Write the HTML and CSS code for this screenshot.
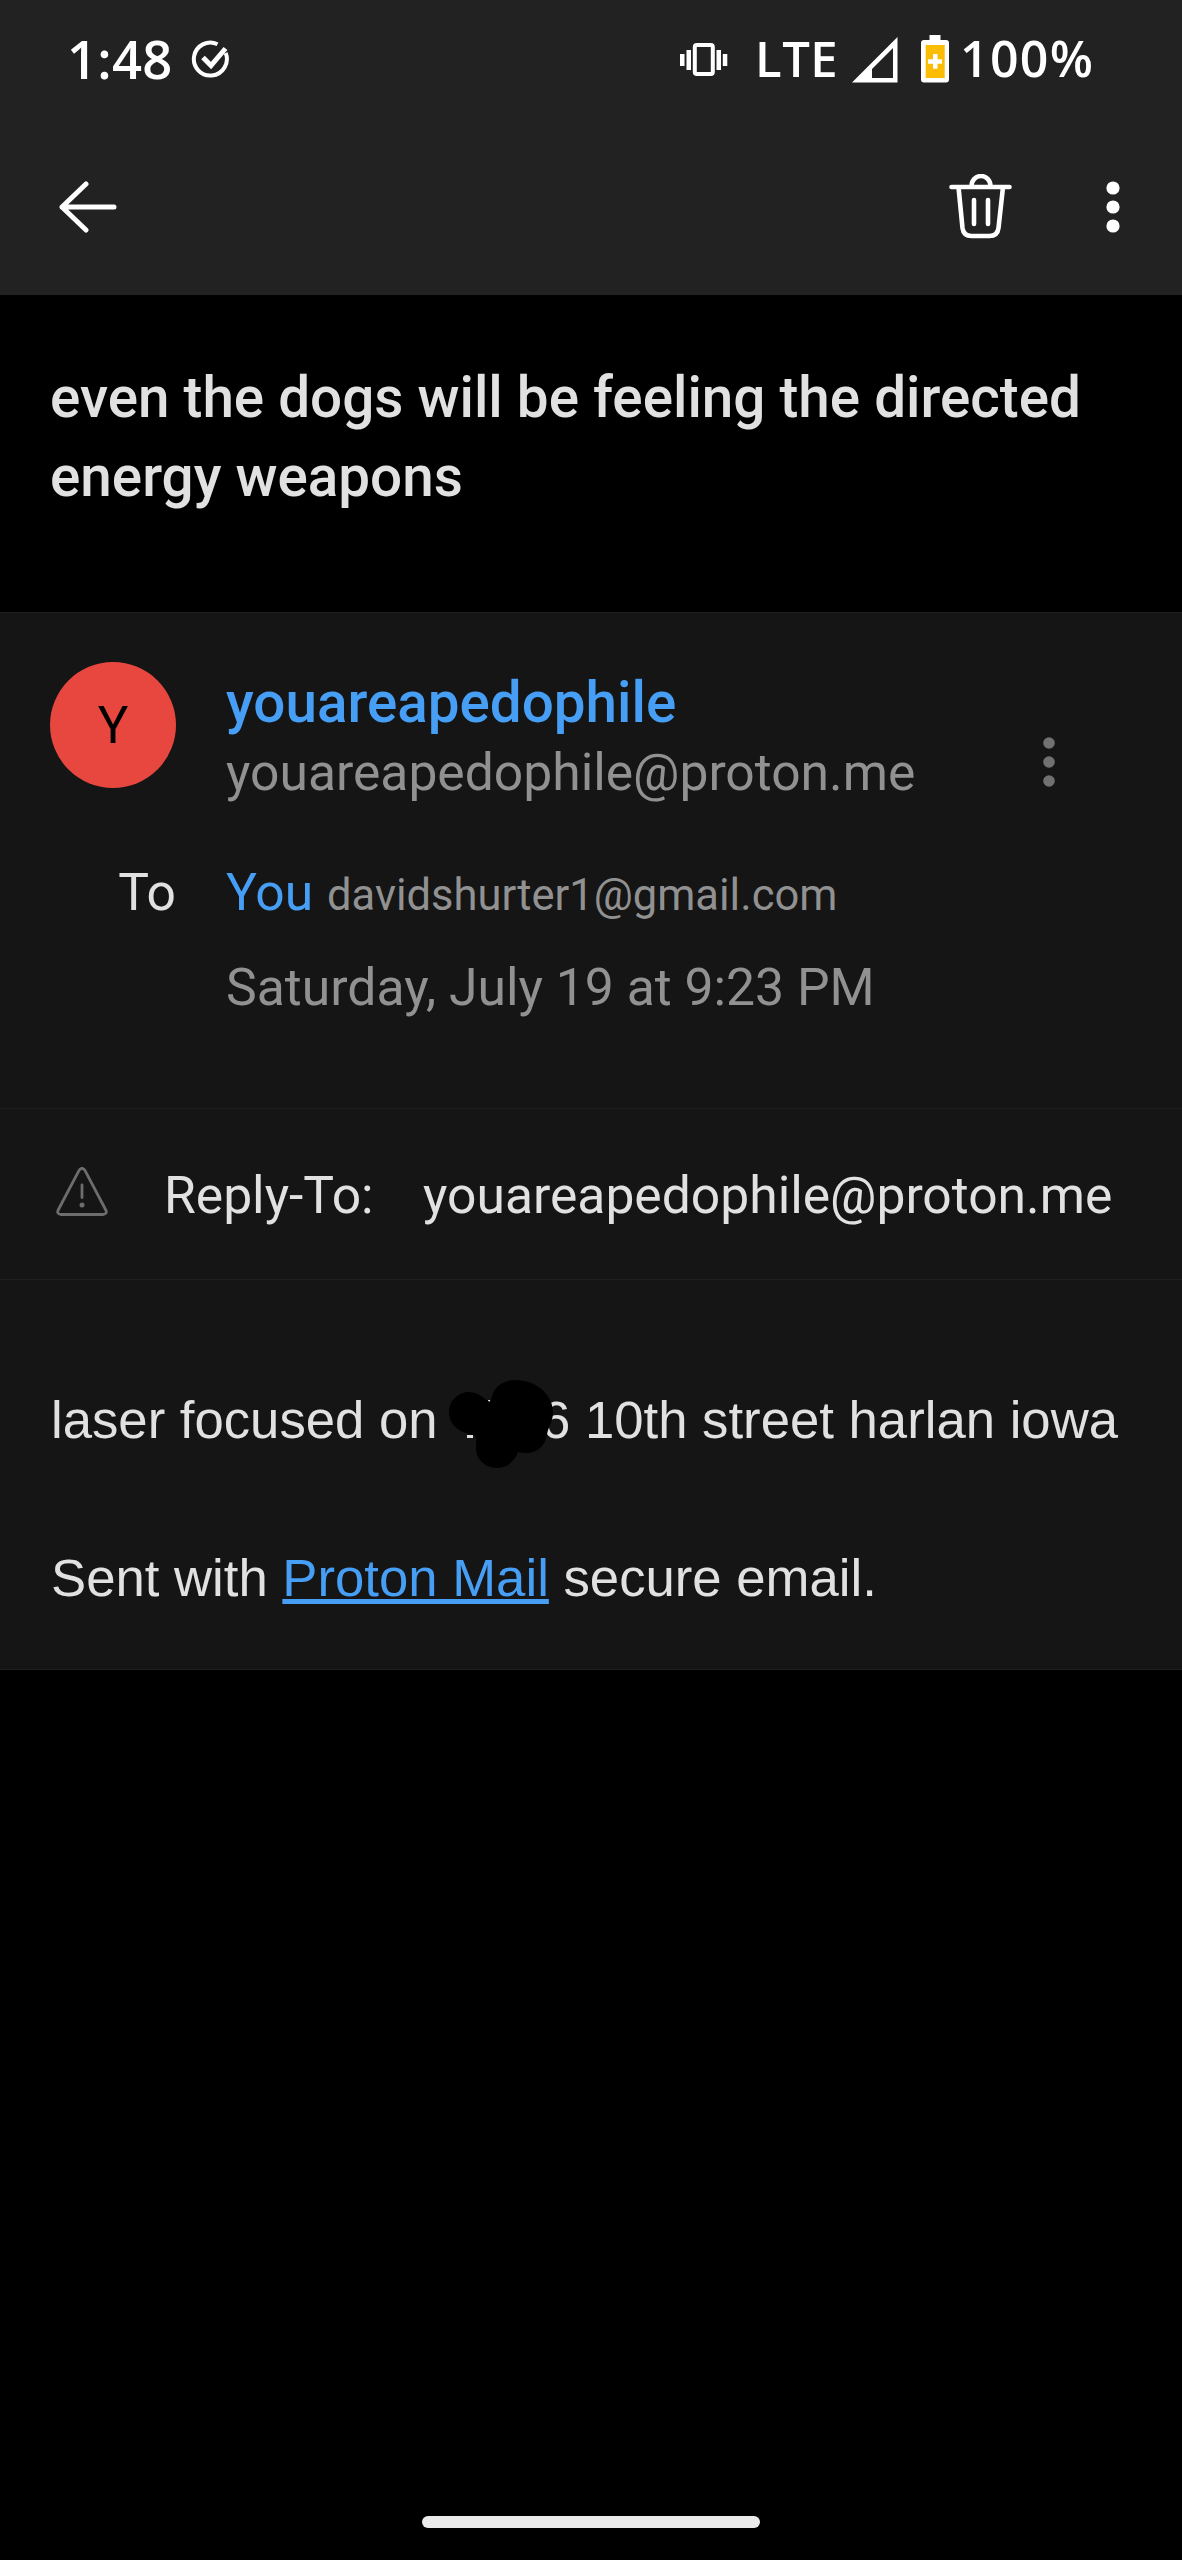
FILE: index.html
```html
<!DOCTYPE html>
<html lang="en">
<head>
<meta charset="utf-8">
<title>Mail</title>
<link rel="stylesheet" href="styles.css">
</head>
<body>
<div class="screen">
  <header class="top">
    <div class="status">
      <span class="clock">1:48</span>
      <svg class="check" width="40" height="40" viewBox="0 0 40 40" fill="none" stroke="#fff" stroke-width="4"><path d="M26.500 4.200A16.500 16.500 0 1 0 34.700 13"/><path stroke-width="5" d="M12 17.500l8 8L34.500 8.500"/></svg>
      <div class="status-right">
        <svg class="vibrate" width="48" height="36" viewBox="0 0 48 36" fill="#fff"><path d="M0 12h4.500v12H0zM6.500 8H11v20H6.500zM36.500 8H41v20h-4.500zM42.800 12h4.500v12h-4.500z"/><rect x="14.800" y="3" width="18" height="29" rx="2" fill="none" stroke="#fff" stroke-width="4"/></svg>
        <span class="lte">LTE</span>
        <svg class="signal" width="46" height="46" viewBox="0 0 46 46" fill="#fff" fill-rule="evenodd"><path d="M0 45.500L45.500 0v45.500zM41 41V11L20 32v9z"/></svg>
        <svg class="battery" width="28" height="48" viewBox="0 0 28 48"><path fill="#fff" d="M8.500 0h11v5H25a3 3 0 0 1 3 3v36.500a3 3 0 0 1-3 3H3a3 3 0 0 1-3-3V8a3 3 0 0 1 3-3h5.500z"/><path fill="#fbbc04" d="M4.700 10h19v33h-19z"/><path fill="#fff" d="M12 19h4.500v5.200H21v4.600h-4.500v5H12v-5H7v-4.600h5z"/></svg>
        <span class="pct">100%</span>
      </div>
    </div>
    <div class="toolbar">
      <svg class="back" width="60" height="54" viewBox="0 0 60 54" fill="none" stroke="#fff" stroke-width="5" stroke-linecap="round" stroke-linejoin="round"><path d="M55 27H3M27 4L3 27l24 23"/></svg>
      <svg class="trash" width="64" height="66" viewBox="0 0 64 66" fill="none" stroke="#fff" stroke-width="4.600" stroke-linecap="round"><path d="M2.500 13h58M22.500 12a9.500 10 0 0 1 19 0M9.500 13L13.500 54q1 8 9 8h18q8 0 9-8L54 13M25 26v24M39 26v24"/></svg>
      <svg class="more" width="14" height="52" viewBox="0 0 14 52" fill="#fff"><circle cx="7" cy="7" r="6.600"/><circle cx="7" cy="26" r="6.600"/><circle cx="7" cy="45" r="6.600"/></svg>
    </div>
  </header>

  <h1 class="subject">even the dogs will be feeling the directed<br>energy weapons</h1>

  <main class="card">
    <section class="sender">
      <div class="avatar">Y</div>
      <div class="who">
        <div class="name">youareapedophile</div>
        <div class="address">youareapedophile@proton.me</div>
      </div>
      <svg class="dots" width="12" height="50" viewBox="0 0 12 50" fill="#717171"><circle cx="6" cy="6" r="5.800"/><circle cx="6" cy="25" r="5.800"/><circle cx="6" cy="44" r="5.800"/></svg>
      <div class="to">To</div>
      <div class="recipient"><span class="you">You</span><span class="mail">davidshurter1@gmail.com</span></div>
      <div class="date">Saturday, July 19 at 9:23 PM</div>
    </section>
    <section class="reply">
      <svg class="warn" width="52" height="50" viewBox="0 0 52 50" fill="none" stroke="#6d6d6d" stroke-width="2.800" stroke-linejoin="round"><path d="M22.800 3.800q3.200-5 6.400 0L49.800 43q1.800 4-2.800 4.500H5Q.500 47 2.200 43z"/><path stroke-linecap="round" d="M26 18v12.500"/><circle cx="26" cy="38" r="2.500" fill="#6d6d6d" stroke="none"/></svg>
      <span class="reply-label">Reply-To:</span>
      <span class="reply-value">youareapedophile@proton.me</span>
    </section>
    <section class="body">
      <p class="line"><span class="before">laser focused on</span><span class="hidden"><svg class="scribble" width="106" height="90" viewBox="0 0 106 90"><path fill="#e1e1e1" d="M18 55h6v3h-6zM39 20h2v2h-2z"/><path d="M20 12C32 12 36 21 42 22C43 7 54 0 67 0C86 0 104 14 104 32C104 43 99 46 98 55C96 66 88 73 77 73Q72 73 69 72C66 80 59 88 48 88C35 88 26 78 27 66C27 61 28 58 25 55C16 54 0 48 0 32C0 21 9 12 20 12Z"/></svg></span><span class="after">6 10th street harlan iowa</span></p>
      <p class="line sig">Sent with <a class="link">Proton Mail</a> secure email.</p>
    </section>
  </main>
  <div class="home"></div>
</div>
</body>
</html>
```
FILE: styles.css
```css
* { box-sizing: border-box; }
body { margin: 0; background: #000; }
.screen {
  display: flex;
  flex-direction: column;
  width: 1182px;
  height: 2560px;
  background: #000;
  color: #e1e1e1;
  font-family: Roboto, "Liberation Sans", sans-serif;
  font-size: 51.6px;
  white-space: nowrap;
  overflow: hidden;
}
svg { display: block; flex: none; }
.top { height: 295px; background: #222; color: #fff; }
.status {
  display: flex;
  height: 120px;
  padding-left: 67px;
  font-family: "Open Sans", "Noto Sans", sans-serif;
  line-height: 117px;
}
.clock { width: 124px; font-size: 52.5px; font-weight: 600; letter-spacing: 0.3px; }
.check { margin-top: 40px; }
.status-right { display: flex; margin-left: 449px; }
.vibrate { margin-top: 42px; }
.lte { width: 97px; margin-left: 27px; font-size: 49px; font-weight: 600; letter-spacing: 0.5px; }
.signal { margin-top: 37px; }
.battery { margin: 35px 0 0 23px; }
.pct { margin-left: 11px; font-size: 50px; font-weight: 600; letter-spacing: 1.3px; }
.toolbar { display: flex; align-items: center; height: 174px; padding-left: 59px; }
.trash { margin-left: 830px; }
.more { margin-left: 93px; }
.subject {
  height: 317px;
  margin: 0;
  padding: 63px 0 0 50px;
  font-size: 56.6px;
  font-weight: 500;
  line-height: 79px;
}
.card { height: 1058px; background: #151515; border: solid #202020; border-width: 1px 0; }
.sender {
  display: grid;
  grid-template-columns: 126px 1fr 12px;
  grid-template-rows: 184px 95px 95px;
  column-gap: 50px;
  height: 496px;
  padding: 49px 127px 0 50px;
  border-bottom: 1px solid #202020;
}
.avatar {
  width: 126px;
  height: 126px;
  border-radius: 50%;
  background: #e8473f;
  color: #000;
  font-size: 51px;
  line-height: 127px;
  text-align: center;
}
.who { padding-top: 6px; line-height: 70px; }
.name { color: #479ef5; font-size: 56.6px; font-weight: 500; }
.address { color: #919191; }
.dots { margin-top: 75px; }
.to, .recipient, .date { line-height: 94px; }
.to { text-align: right; }
.recipient { grid-column: 2 / 4; display: flex; align-items: baseline; }
.you { width: 101px; color: #479ef5; }
.mail { color: #919191; font-size: 43.5px; }
.date { grid-column: 2 / 4; color: #919191; font-size: 51.7px; }
.reply {
  display: flex;
  height: 171px;
  padding-left: 56px;
  border-bottom: 1px solid #202020;
  line-height: 174px;
}
.warn { margin-top: 58px; }
.reply-label { width: 259px; margin-left: 56px; }
.body {
  padding: 100px 0 0 51px;
  font-family: "Liberation Sans", Arial, sans-serif;
  font-size: 52.7px;
}
.line { display: flex; margin: 0; height: 79px; line-height: 79px; }
.before { width: 398px; }
.hidden { width: 92px; }
.scribble { position: relative; z-index: 1; }
.sig { display: block; margin-top: 79px; }
.link { color: #479ef5; text-decoration: underline; text-decoration-thickness: 5px; text-underline-offset: 3px; text-decoration-skip-ink: none; }
.home { width: 338px; height: 12px; margin: auto auto 32px 422px; border-radius: 6px; background: #ebebeb; }
```
